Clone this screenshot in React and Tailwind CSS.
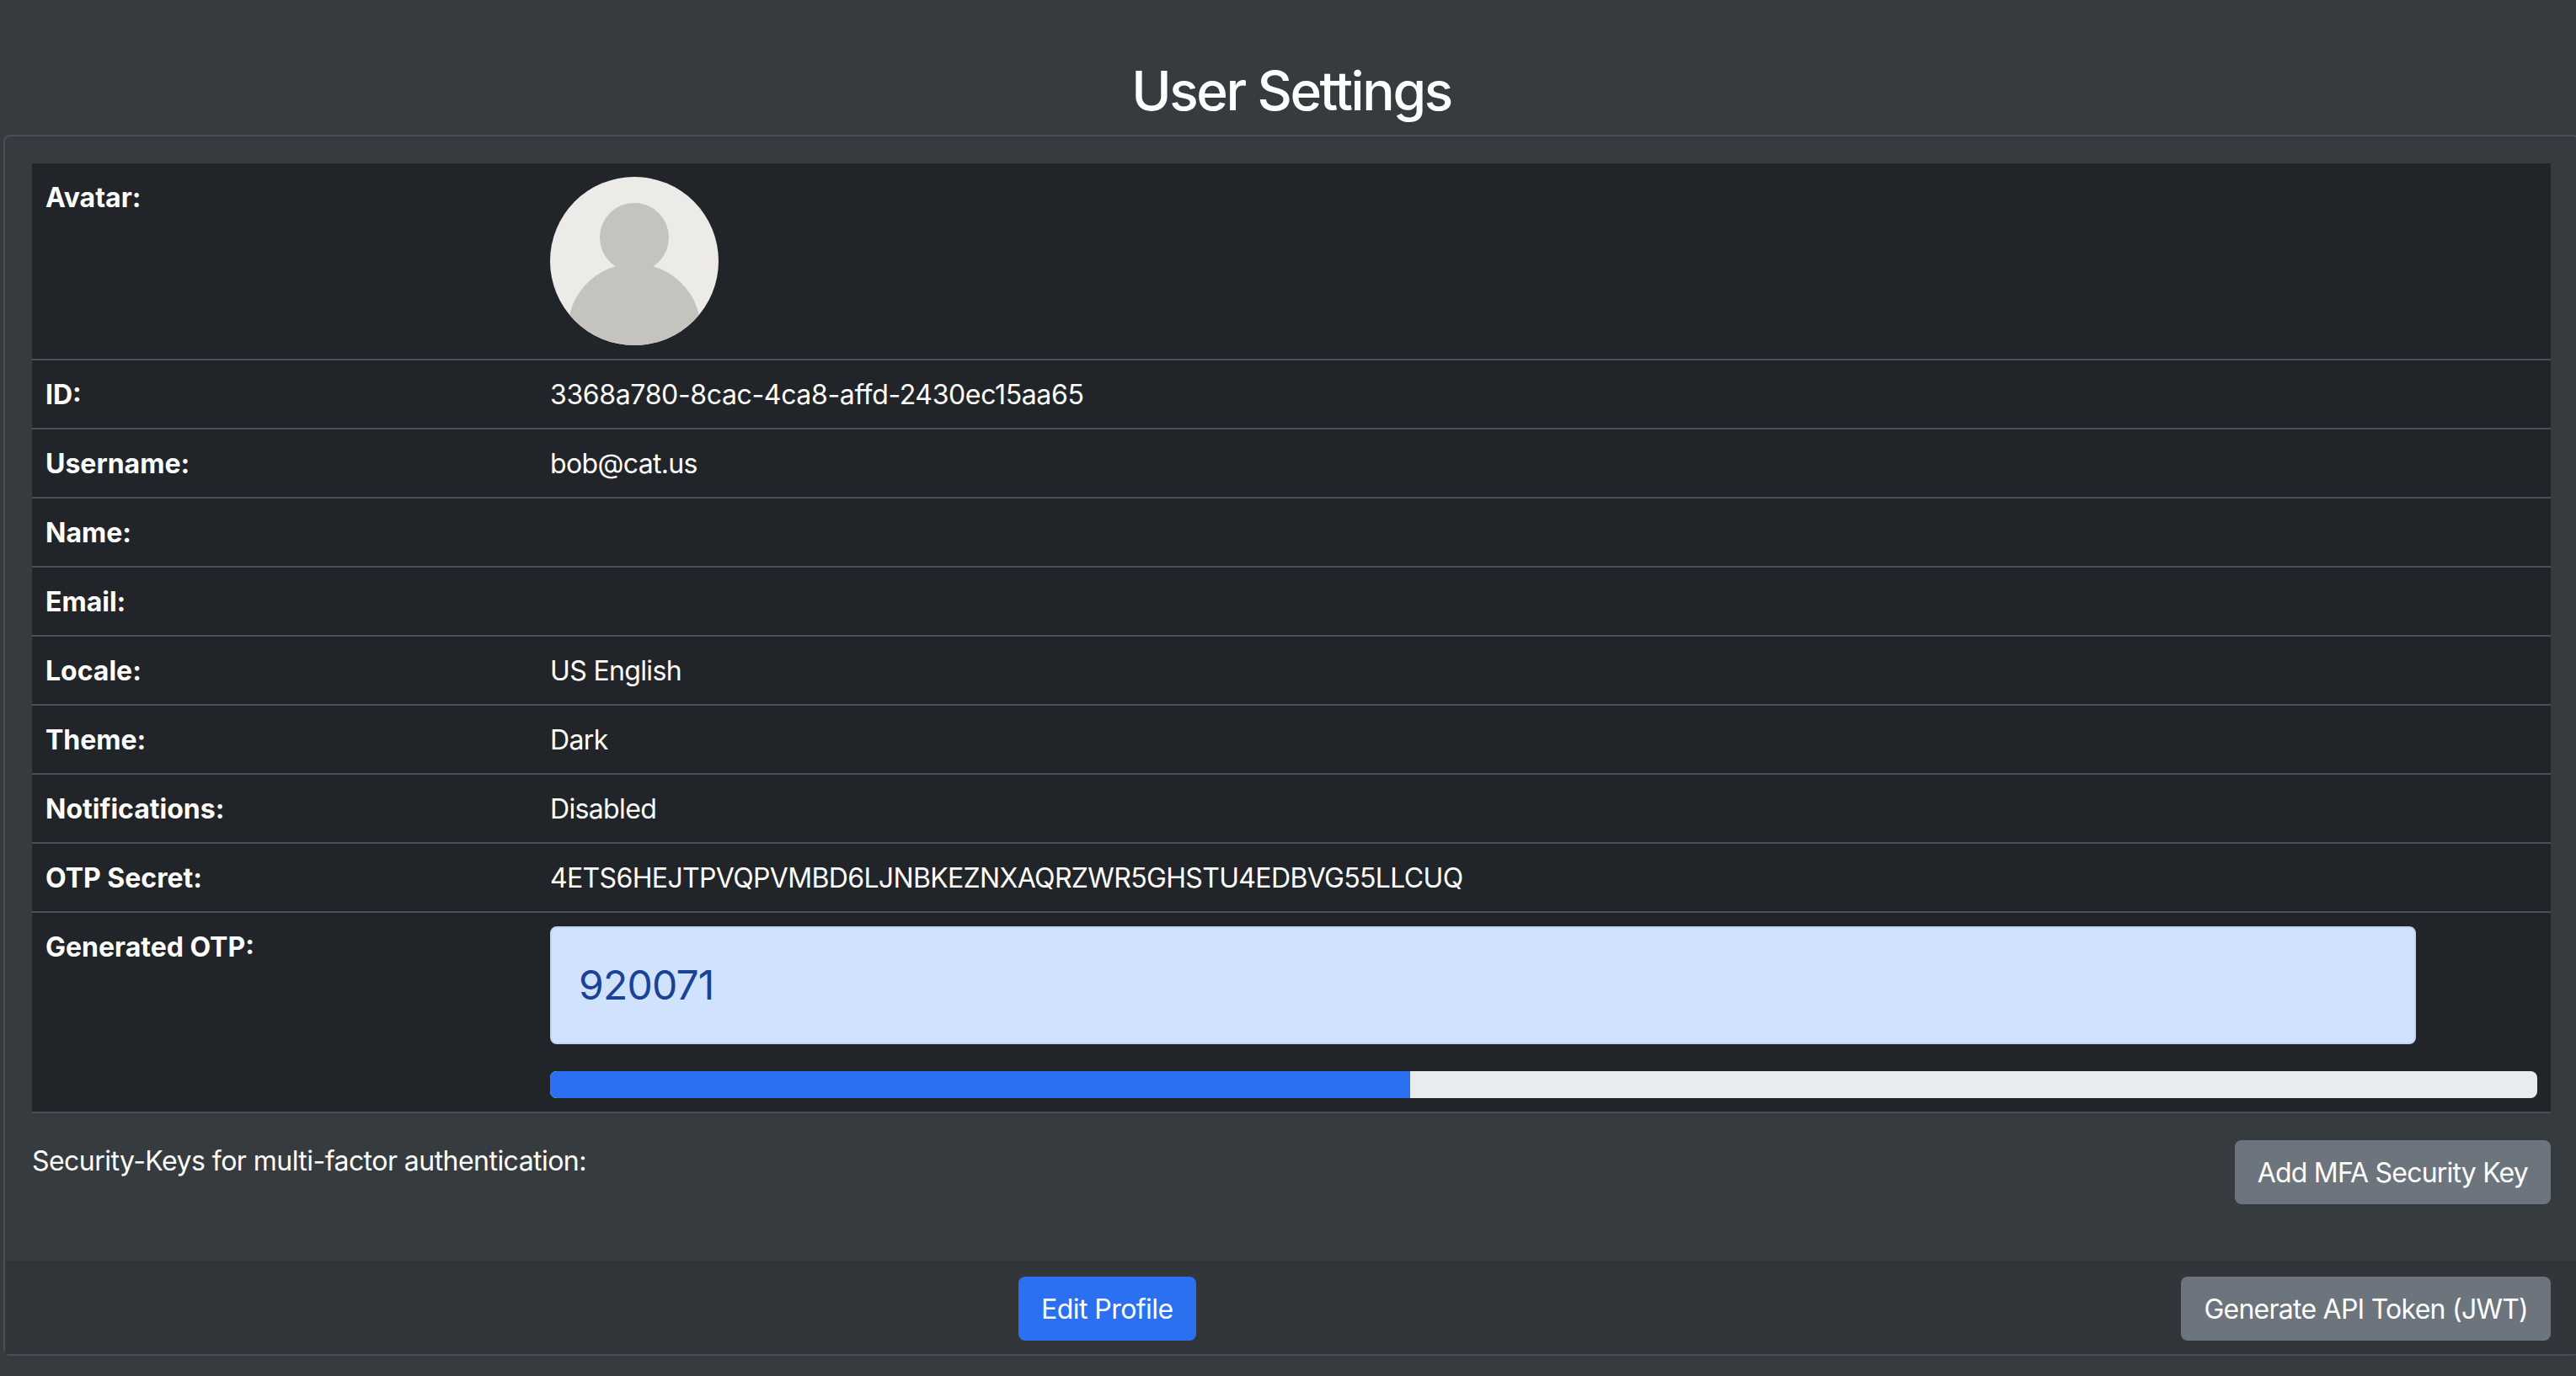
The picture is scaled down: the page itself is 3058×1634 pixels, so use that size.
const FONT = "font-['Inter','Liberation_Sans',sans-serif]"

const ROWS = [
  ['ID:', '3368a780-8cac-4ca8-affd-2430ec15aa65'],
  ['Username:', 'bob@cat.us'],
  ['Name:', ''],
  ['Email:', ''],
  ['Locale:', 'US English'],
  ['Theme:', 'Dark'],
  ['Notifications:', 'Disabled'],
  ['OTP Secret:', '4ETS6HEJTPVQPVMBD6LJNBKEZNXAQRZWR5GHSTU4EDBVG55LLCUQ'],
]

function Avatar() {
  return (
    <svg width="200" height="200" viewBox="0 0 200 200" className="block">
      <defs>
        <clipPath id="avatar-clip">
          <circle cx="100" cy="100" r="100" />
        </clipPath>
      </defs>
      <circle cx="100" cy="100" r="100" fill="#ecebe7" />
      <g clipPath="url(#avatar-clip)" fill="#c4c3be">
        <circle cx="100" cy="72" r="41" />
        <circle cx="100" cy="182" r="79" />
      </g>
    </svg>
  )
}

function Row({ label, children }) {
  return (
    <tr className="border-b-2 border-[#495057]">
      <th className="w-[599px] px-4 pt-[17px] pb-[15px] text-left align-top font-bold">{label}</th>
      <td className="p-4 align-top">{children}</td>
    </tr>
  )
}

function Button({ className, children }) {
  return (
    <button className={`rounded-[8px] px-[27px] pt-[15px] pb-[13px] ${className}`}>{children}</button>
  )
}

export default function App() {
  return (
    <div className={`min-h-[1634px] overflow-hidden bg-[#363b40] text-[32px] leading-[48px] text-white ${FONT}`}>
      <h3 className="pt-[69px] pb-[14px] pl-2 text-center text-[64px] leading-[77px] font-medium tracking-[-2.4px]">User Settings</h3>

      <div className="ml-1 w-[3058px] rounded-[8px] border-2 border-[#495057]">
        <div className="px-8 pt-8 pb-[68px]">
          <table className="w-[2990px] border-collapse bg-[#212529]">
            <tbody>
              <Row label="Avatar:">
                <Avatar />
              </Row>
              {ROWS.map(([label, value]) => (
                <Row key={label} label={label}>
                  <div className={`-mb-px pt-px ${label === 'ID:' ? 'tracking-[-0.36px]' : 'tracking-[-0.65px]'}`}>{value}</div>
                </Row>
              ))}
              <Row label="Generated OTP:">
                <div className="mb-8 w-[2215px] rounded-[8px] border-2 border-[#c0d6f8] bg-[#d0e2fd] p-8 text-[48px] leading-[72px] tracking-[-0.8px] text-[#1a4296]">
                  920071
                </div>
                <div className="h-8 overflow-hidden rounded-[8px] bg-[#e9ecef]">
                  <div className="h-full w-[43.3%] bg-[#2b70f0]" />
                </div>
              </Row>
            </tbody>
          </table>

          <div className="mt-8 flex items-start justify-between">
            <p className="pt-px tracking-[-0.54px]">Security-Keys for multi-factor authentication:</p>
            <Button className="bg-[#6c757d] tracking-[-0.8px]">Add MFA Security Key</Button>
          </div>
        </div>

        <div className="flex items-center justify-between border-t-2 border-[#2e3236] bg-[#32363b] py-4 pr-8 pl-[1203px]">
          <Button className="bg-[#2b70f0] tracking-[-0.55px]">Edit Profile</Button>
          <Button className="bg-[#6c757d] tracking-[-0.75px]">Generate API Token (JWT)</Button>
        </div>
      </div>
    </div>
  )
}
